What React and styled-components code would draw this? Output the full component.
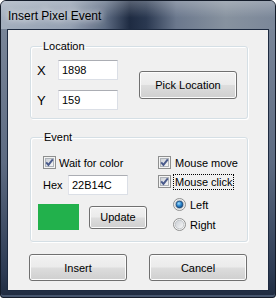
import React from "react";
import styled, { createGlobalStyle } from "styled-components";

const Global = createGlobalStyle`
  html, body {
    margin: 0;
    padding: 0;
    background: #ffffff;
  }
  body {
    font-family: "Liberation Sans", Arial, sans-serif;
    font-size: 11px;
    color: #000;
  }
`;

const Window = styled.div`
  width: 276px;
  height: 298px;
  box-sizing: border-box;
  display: flex;
  flex-direction: column;
  padding: 0 6px 6px 6px;
  border: 1px solid #141c2a;
  border-radius: 6px 6px 3px 3px;
  background: linear-gradient(180deg, #7f8b9d 0%, #5d6b82 55%, #2c3a52 92%, #1f2b40 100%);
  box-shadow: inset 0 -2px 0 #46556d;
  overflow: hidden;
`;

const TitleBar = styled.div`
  height: 28px;
  margin: 0 -6px;
  padding: 0 7px;
  display: flex;
  align-items: center;
  background:
    linear-gradient(180deg, rgba(255, 255, 255, 0.25) 0%, rgba(255, 255, 255, 0) 60%),
    linear-gradient(
      90deg,
      #a4afbe 0%,
      #95a1b2 25%,
      #5f6d84 38%,
      #1e2b42 47%,
      #2a3850 53%,
      #6b788d 64%,
      #87929f 82%,
      #7b8799 100%
    );
`;

const Title = styled.span`
  font-family: "Liberation Sans", Arial, sans-serif;
  font-size: 12px;
  color: #000;
  text-shadow: 0 0 6px rgba(255, 255, 255, 0.9), 0 0 10px rgba(255, 255, 255, 0.7);
  margin-top: 2px;
`;

const Client = styled.div`
  flex: 1;
  box-sizing: border-box;
  background: #f0f0f0;
  border: 1px solid #1d2a40;
  display: flex;
  flex-direction: column;
  padding: 10px 20px 0 22px;
`;

const Group = styled.fieldset`
  margin: ${(p) => p.$top || 0}px 0 0 0;
  padding: ${(p) => p.$pad};
  border: 1px solid #d5dfe5;
  border-radius: 3px;
  box-shadow: inset 1px 1px 0 #ffffff, 1px 1px 0 #ffffff;
  min-width: 0;
`;

const Legend = styled.legend`
  margin-left: 5px;
  padding: 0 1px;
  font-size: 11px;
  line-height: 13px;
`;

const LocationBody = styled.div`
  display: flex;
  align-items: center;
  justify-content: space-between;
`;

const Fields = styled.div`
  display: flex;
  flex-direction: column;
  gap: 10px;
`;

const FieldRow = styled.div`
  display: flex;
  align-items: center;
  margin-left: ${(p) => p.$indent || 0}px;
  margin-top: ${(p) => p.$top || 0}px;
`;

const FieldLabel = styled.span`
  width: ${(p) => p.$w}px;
  font-size: ${(p) => p.$size || 11}px;
`;

const TextBox = styled.div`
  width: 60px;
  height: 20px;
  box-sizing: border-box;
  display: flex;
  align-items: center;
  padding-left: 3px;
  background: #fff;
  border: 1px solid #dbdfe6;
  border-top-color: #abadb3;
  border-left-color: #e2e3ea;
  font-size: 11px;
`;

const Button = styled.div`
  width: ${(p) => p.$w}px;
  height: ${(p) => p.$h}px;
  box-sizing: border-box;
  display: flex;
  align-items: center;
  justify-content: center;
  border: 1px solid #707070;
  border-radius: 3px;
  background: linear-gradient(180deg, #f2f2f2 0%, #ebebeb 48%, #dddddd 52%, #cfcfcf 100%);
  box-shadow: inset 0 0 0 1px #fcfcfc;
  font-size: 11px;
`;

const EventBody = styled.div`
  display: flex;
  gap: 10px;
`;

const LeftCol = styled.div`
  width: 110px;
  display: flex;
  flex-direction: column;
`;

const RightCol = styled.div`
  display: flex;
  flex-direction: column;
`;

const OptionRow = styled.div`
  height: 17px;
  display: flex;
  align-items: center;
  gap: ${(p) => p.$gap || 4}px;
  margin-top: ${(p) => p.$top || 0}px;
  margin-left: ${(p) => p.$indent || 0}px;
  white-space: nowrap;
`;

const FocusLabel = styled.span`
  margin-left: -2px;
  padding: 1px 1px 0 1px;
  border: 1px dotted #000;
  line-height: 13px;
`;

const SwatchRow = styled.div`
  display: flex;
  align-items: center;
  gap: 10px;
  margin-top: 9px;
`;

const Swatch = styled.div`
  width: 41px;
  height: 26px;
  background: #22b14c;
`;

const Actions = styled.div`
  display: flex;
  gap: 22px;
  margin: 12px 0 0 -1px;
`;

function CheckBox() {
  return (
    <svg width="13" height="13" viewBox="0 0 13 13">
      <defs>
        <linearGradient id="cbFill" x1="0" y1="0" x2="1" y2="1">
          <stop offset="0" stopColor="#cbcfd5" />
          <stop offset="1" stopColor="#f7f7f7" />
        </linearGradient>
      </defs>
      <rect x="0.5" y="0.5" width="12" height="12" fill="#f4f4f4" stroke="#8e8f8f" />
      <rect x="2.5" y="2.5" width="8" height="8" fill="url(#cbFill)" stroke="#aeb3b9" />
      <path d="M3.2 6.4 L5.4 8.9 L9.8 3.3" fill="none" stroke="#4a5b8c" strokeWidth="1.9" />
    </svg>
  );
}

function Radio({ on }) {
  return (
    <svg width="13" height="13" viewBox="0 0 13 13">
      <defs>
        <linearGradient id="rdFill" x1="0" y1="0" x2="1" y2="1">
          <stop offset="0" stopColor="#c8ccd2" />
          <stop offset="1" stopColor="#fafafa" />
        </linearGradient>
        <radialGradient id="rdDot" cx="0.4" cy="0.35" r="0.7">
          <stop offset="0" stopColor="#a6e0ff" />
          <stop offset="0.5" stopColor="#2a86cf" />
          <stop offset="1" stopColor="#10487f" />
        </radialGradient>
      </defs>
      <circle cx="6.5" cy="6.5" r="6" fill="#f4f4f4" stroke="#8e8f8f" />
      <circle cx="6.5" cy="6.5" r="4.3" fill="url(#rdFill)" stroke="#b8bcc2" strokeWidth="0.8" />
      {on && <circle cx="6.5" cy="6.5" r="3.4" fill="url(#rdDot)" stroke="#1c4470" strokeWidth="0.7" />}
    </svg>
  );
}

export default function App() {
  return (
    <>
      <Global />
      <Window>
        <TitleBar>
          <Title>Insert Pixel Event</Title>
        </TitleBar>
        <Client>
          <Group $pad="7px 10px 8px 6px">
            <Legend>Location</Legend>
            <LocationBody>
              <Fields>
                <FieldRow>
                  <FieldLabel $w={21} $size={13}>X</FieldLabel>
                  <TextBox>1898</TextBox>
                </FieldRow>
                <FieldRow>
                  <FieldLabel $w={21} $size={13}>Y</FieldLabel>
                  <TextBox>159</TextBox>
                </FieldRow>
              </Fields>
              <Button $w={98} $h={28}>Pick Location</Button>
            </LocationBody>
          </Group>

          <Group $top={12} $pad="10px 6px 8px 7px">
            <Legend>Event</Legend>
            <EventBody>
              <LeftCol>
                <OptionRow $indent={5} $gap={3}>
                  <CheckBox />
                  <span>Wait for color</span>
                </OptionRow>
                <FieldRow $indent={5} $top={4}>
                  <FieldLabel $w={25}>Hex</FieldLabel>
                  <TextBox>22B14C</TextBox>
                </FieldRow>
                <SwatchRow>
                  <Swatch />
                  <Button $w={58} $h={23}>Update</Button>
                </SwatchRow>
              </LeftCol>
              <RightCol>
                <OptionRow>
                  <CheckBox />
                  <span>Mouse move</span>
                </OptionRow>
                <OptionRow $top={2}>
                  <CheckBox />
                  <FocusLabel>Mouse click</FocusLabel>
                </OptionRow>
                <OptionRow $top={6} $indent={15}>
                  <Radio on />
                  <span>Left</span>
                </OptionRow>
                <OptionRow $top={3} $indent={15}>
                  <Radio />
                  <span>Right</span>
                </OptionRow>
              </RightCol>
            </EventBody>
          </Group>

          <Actions>
            <Button $w={98} $h={27}>Insert</Button>
            <Button $w={98} $h={27}>Cancel</Button>
          </Actions>
        </Client>
      </Window>
    </>
  );
}
